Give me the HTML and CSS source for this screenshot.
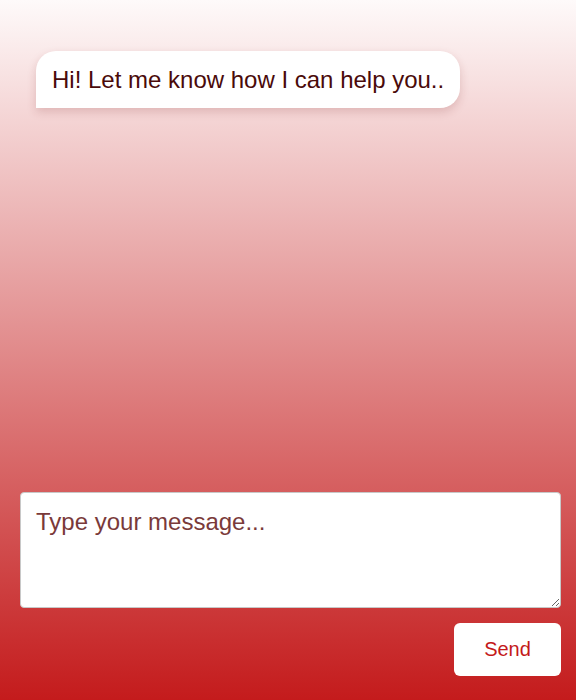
FILE: index.html
```html
<!DOCTYPE html>
<html>
<head>
<meta charset="utf-8">
<link rel="stylesheet" href="styles.css">
</head>
<body>
<div class="app">
  <div class="messages">
    <div class="bubble">Hi! Let me know how I can help you..</div>
  </div>
  <div class="composer">
    <textarea class="input" placeholder="Type your message..."></textarea>
    <div class="actions">
      <button class="send">Send</button>
    </div>
  </div>
</div>
</body>
</html>
```
FILE: styles.css
```css
html, body {
  margin: 0;
  padding: 0;
  height: 100%;
}
body {
  background: linear-gradient(to bottom, #fefafa 0%, #c41b1c 100%);
  font-family: "Liberation Sans", Arial, sans-serif;
}
.app {
  height: 700px;
  display: flex;
  flex-direction: column;
  box-sizing: border-box;
  padding: 51px 15px 24px 20px;
}
.messages {
  flex: 1;
  display: flex;
  flex-direction: column;
  align-items: flex-start;
  padding-left: 16px;
}
.bubble {
  background: #fff;
  color: #4a0a0a;
  font-size: 24px;
  line-height: 27px;
  padding: 15px 16px;
  border-radius: 20px 20px 20px 0;
  box-shadow: 0 4px 10px rgba(120, 30, 30, 0.18);
}
.composer {
  display: flex;
  flex-direction: column;
  gap: 15px;
}
.input {
  display: block;
  width: 100%;
  height: 116px;
  box-sizing: border-box;
  border: 1px solid #c8c8c8;
  border-radius: 4px;
  padding: 15px;
  font-family: "Liberation Sans", Arial, sans-serif;
  font-size: 24px;
  background: #fff;
  resize: vertical;
  margin: 0;
}
.input::placeholder {
  color: #7a3a3a;
  opacity: 1;
}
.actions {
  display: flex;
  justify-content: flex-end;
}
.send {
  width: 107px;
  height: 53px;
  background: #fff;
  color: #c41a1a;
  border: none;
  border-radius: 6px;
  font-family: "Liberation Sans", Arial, sans-serif;
  font-size: 20px;
  cursor: pointer;
}
```
